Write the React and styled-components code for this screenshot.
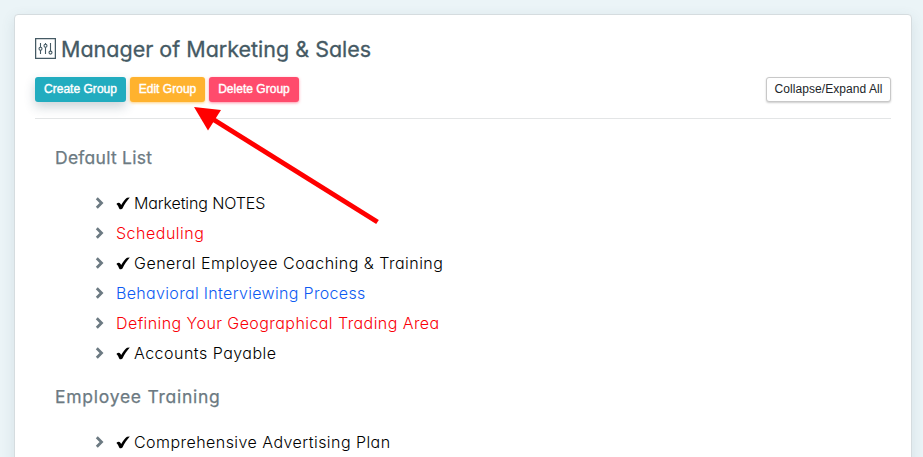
import React from "react";
import styled, { createGlobalStyle } from "styled-components";

const groups = [
  {
    name: "Default List",
    tracking: "0.26px",
    items: [
      { label: "Marketing NOTES", done: true, tracking: "-0.12px" },
      { label: "Scheduling", color: "#fa0008", tracking: "0.5px" },
      { label: "General Employee Coaching & Training", done: true, tracking: "0.48px" },
      { label: "Behavioral Interviewing Process", color: "#0d5bf2", tracking: "0.33px" },
      { label: "Defining Your Geographical Trading Area", color: "#fa0008", tracking: "0.43px" },
      { label: "Accounts Payable", done: true, tracking: "0.49px" }
    ]
  },
  {
    name: "Employee Training",
    tracking: "0.74px",
    items: [{ label: "Comprehensive Advertising Plan", done: true, tracking: "0.45px" }]
  }
];

const SlidersIcon = () => (
  <Sliders viewBox="0 0 21 21">
    <rect x="0.6" y="0.6" width="19.8" height="19.8" strokeWidth="1.3" />
    <path d="M5.5 5v4M5.5 12v4M10.5 5v1.2M10.5 9.2v6.8M15.5 5v8" />
    <circle cx="5.5" cy="10.7" r="1.5" />
    <circle cx="10.5" cy="7.7" r="1.5" />
    <circle cx="15.5" cy="14.6" r="1.5" />
  </Sliders>
);

const Row = ({ item }) => (
  <Item>
    <Chevron viewBox="0 0 9 12">
      <path d="M1.8 1.3L6.5 6L1.8 10.7" />
    </Chevron>
    {item.done && (
      <Check viewBox="0 0 14 13">
        <path d="M0.4 6.9C1.6 5.6 3.4 5.3 4.2 6.4L5.2 7.9C7 4.9 9 2.2 11 0.7L13.8 0.4C11 3.4 8.5 7.2 6.6 11.2C6 12.3 4.2 12.6 3.5 12C2.6 10.2 1.9 7.8 0.4 6.9Z" />
      </Check>
    )}
    <Label $color={item.color} $tracking={item.tracking}>{item.label}</Label>
  </Item>
);

export default function App() {
  return (
    <Page>
      <GlobalStyle />
      <Card>
        <Header>
          <SlidersIcon />
          <Title>Manager of Marketing &amp; Sales</Title>
        </Header>
        <Toolbar>
          <Button $bg="#22acbf" $width="91px" $shadow="0 5px 11px rgba(40, 70, 90, 0.24)">
            Create Group
          </Button>
          <Button $bg="#ffb22e" $width="75px" $shadow="0 1px 3px rgba(255, 178, 46, 0.6)">
            Edit Group
          </Button>
          <Button $bg="#ff4b6c" $width="90px" $shadow="0 1px 3px rgba(255, 75, 108, 0.6)">
            Delete Group
          </Button>
          <Toggle>Collapse/Expand All</Toggle>
        </Toolbar>
        <Lists>
          {groups.map(group => (
            <section key={group.name}>
              <GroupName $tracking={group.tracking}>{group.name}</GroupName>
              <List>
                {group.items.map(item => (
                  <Row key={item.label} item={item} />
                ))}
              </List>
            </section>
          ))}
        </Lists>
      </Card>
      <Pointer viewBox="0 0 190 120">
        <path d="M183.5 115L17 11" />
        <polygon points="0,0 27,3 14,23.5" />
      </Pointer>
    </Page>
  );
}

const GlobalStyle = createGlobalStyle`
  * {
    box-sizing: border-box;
  }
  body {
    margin: 0;
    background: #ebf4f7;
    font-family: Inter, "Liberation Sans", sans-serif;
    font-feature-settings: "cv11";
  }
`;
const Page = styled.div`
  position: relative;
  height: 457px;
  padding: 14px 11px 0 14px;
  overflow: hidden;
`;
const Card = styled.main`
  height: 500px;
  padding: 20px 20px 0;
  background: #fff;
  border: 1px solid #d5dcdf;
  border-radius: 4px;
  box-shadow: 0 4px 14px rgba(60, 90, 105, 0.12);
`;
const Header = styled.header`
  display: flex;
  align-items: center;
  height: 27px;
`;
const Sliders = styled.svg`
  width: 21px;
  height: 21px;
  margin-right: 5px;
  fill: none;
  stroke: #455a64;
  stroke-width: 1.1;
`;
const Title = styled.h1`
  margin: 2px 0 0;
  color: #455a64;
  font-size: 21.5px;
  font-weight: 400;
  line-height: 27px;
  white-space: nowrap;
  -webkit-text-stroke: 0.3px #455a64;
`;
const Toolbar = styled.div`
  display: flex;
  gap: 4px;
  height: 57px;
  padding-top: 15px;
  border-bottom: 1px solid #e3e5e6;
`;
const Button = styled.button`
  width: ${p => p.$width};
  height: 25px;
  padding: 0 0 1px;
  color: #fff;
  background: ${p => p.$bg};
  border: 0;
  border-radius: 3px;
  box-shadow: ${p => p.$shadow};
  font: 12px/24px "Liberation Sans", sans-serif;
  letter-spacing: 0.02px;
  white-space: nowrap;
  -webkit-text-stroke: 0.4px #fff;
`;
const Toggle = styled(Button)`
  width: 125px;
  margin-left: auto;
  color: #212529;
  background: #fff;
  border: 1px solid #c8c8c8;
  box-shadow: 0 1px 2px rgba(0, 0, 0, 0.2);
  line-height: 22px;
  letter-spacing: 0.06px;
  -webkit-text-stroke: 0;
`;
const Lists = styled.div`
  padding: 10px 20px 0;
`;
const GroupName = styled.h2`
  margin: 17px 0 18px;
  color: #6c7a82;
  font-size: 17.5px;
  font-weight: 400;
  line-height: 24px;
  letter-spacing: ${p => p.$tracking || 0};
  -webkit-text-stroke: 0.25px #6c7a82;
`;
const List = styled.ul`
  margin: 0;
  padding: 0 0 0 40px;
  list-style: none;
`;
const Item = styled.li`
  display: flex;
  align-items: center;
  height: 30px;
`;
const Chevron = styled.svg`
  width: 9px;
  height: 12px;
  margin-right: 12px;
  fill: none;
  stroke: #6c7a82;
  stroke-width: 2.8;
`;
const Check = styled.svg`
  width: 14px;
  height: 13px;
  margin-right: 4px;
`;
const Label = styled.span`
  color: ${p => p.$color || "#000"};
  font-size: 16px;
  font-weight: 350;
  letter-spacing: ${p => p.$tracking || 0};
  white-space: nowrap;
`;
/* arrow that lies over the toolbar and the list */
const Pointer = styled.svg`
  position: absolute;
  top: 107px;
  left: 194px;
  width: 190px;
  height: 120px;
  fill: #f00;
  stroke: #f00;

  path {
    stroke-width: 5;
  }
  polygon {
    stroke: none;
  }
`;
